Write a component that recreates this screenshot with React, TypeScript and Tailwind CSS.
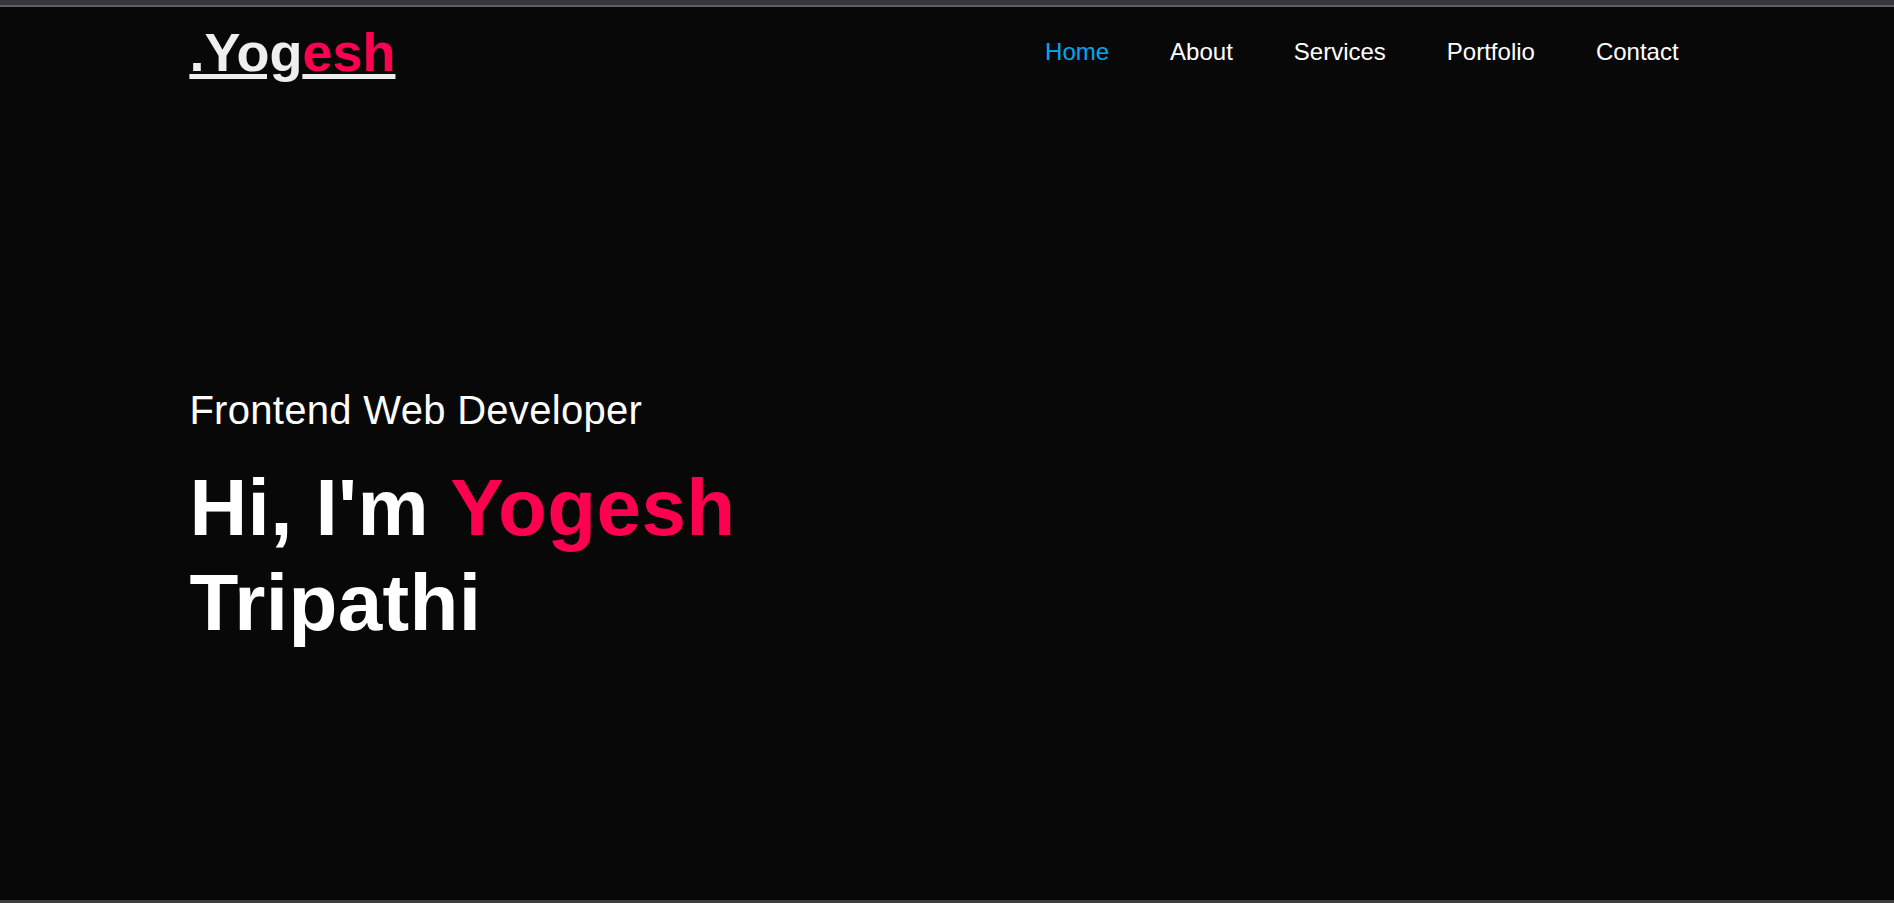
import React from "react";

const font = { fontFamily: '"Liberation Sans", Arial, Helvetica, sans-serif' };

export default function App() {
  const links = ["Home", "About", "Services", "Portfolio", "Contact"];
  return (
    <div
      className="h-[903px] w-full overflow-hidden bg-[#080808] flex flex-col"
      style={font}
    >
      <div className="h-[5px] bg-[#35363a]" />
      <div className="h-[2px] bg-[#5e5f63]" />
      <header className="h-[77px] px-[10%] pt-[15px] flex items-start">
        <a
          href="#"
          className="text-[54px] leading-[60px] font-bold text-[#eeeeee] underline"
        >
          .Yog<span className="text-[#ff0050]">esh</span>
        </a>
        <nav className="ml-auto mr-[26px] mt-[16px] flex gap-[61px]">
          {links.map((l, i) => (
            <a
              key={l}
              href="#"
              className={
                "text-[24px] leading-[28px] " +
                (i === 0 ? "text-[#00a8f3]" : "text-white")
              }
            >
              {l}
            </a>
          ))}
        </nav>
      </header>
      <main className="flex-1 px-[10%] pt-[303px]">
        <p className="text-[40px] leading-[46px] tracking-[0.3px] text-white">
          Frontend Web Developer
        </p>
        <h1 className="mt-[27px] text-[80px] leading-[95px] tracking-[0.4px] font-bold text-white">
          Hi, I'm <span className="text-[#ff0050]">Yogesh</span>
          <br />
          Tripathi
        </h1>
      </main>
      <div className="h-[3px] bg-[#3c3c3c]" />
    </div>
  );
}
